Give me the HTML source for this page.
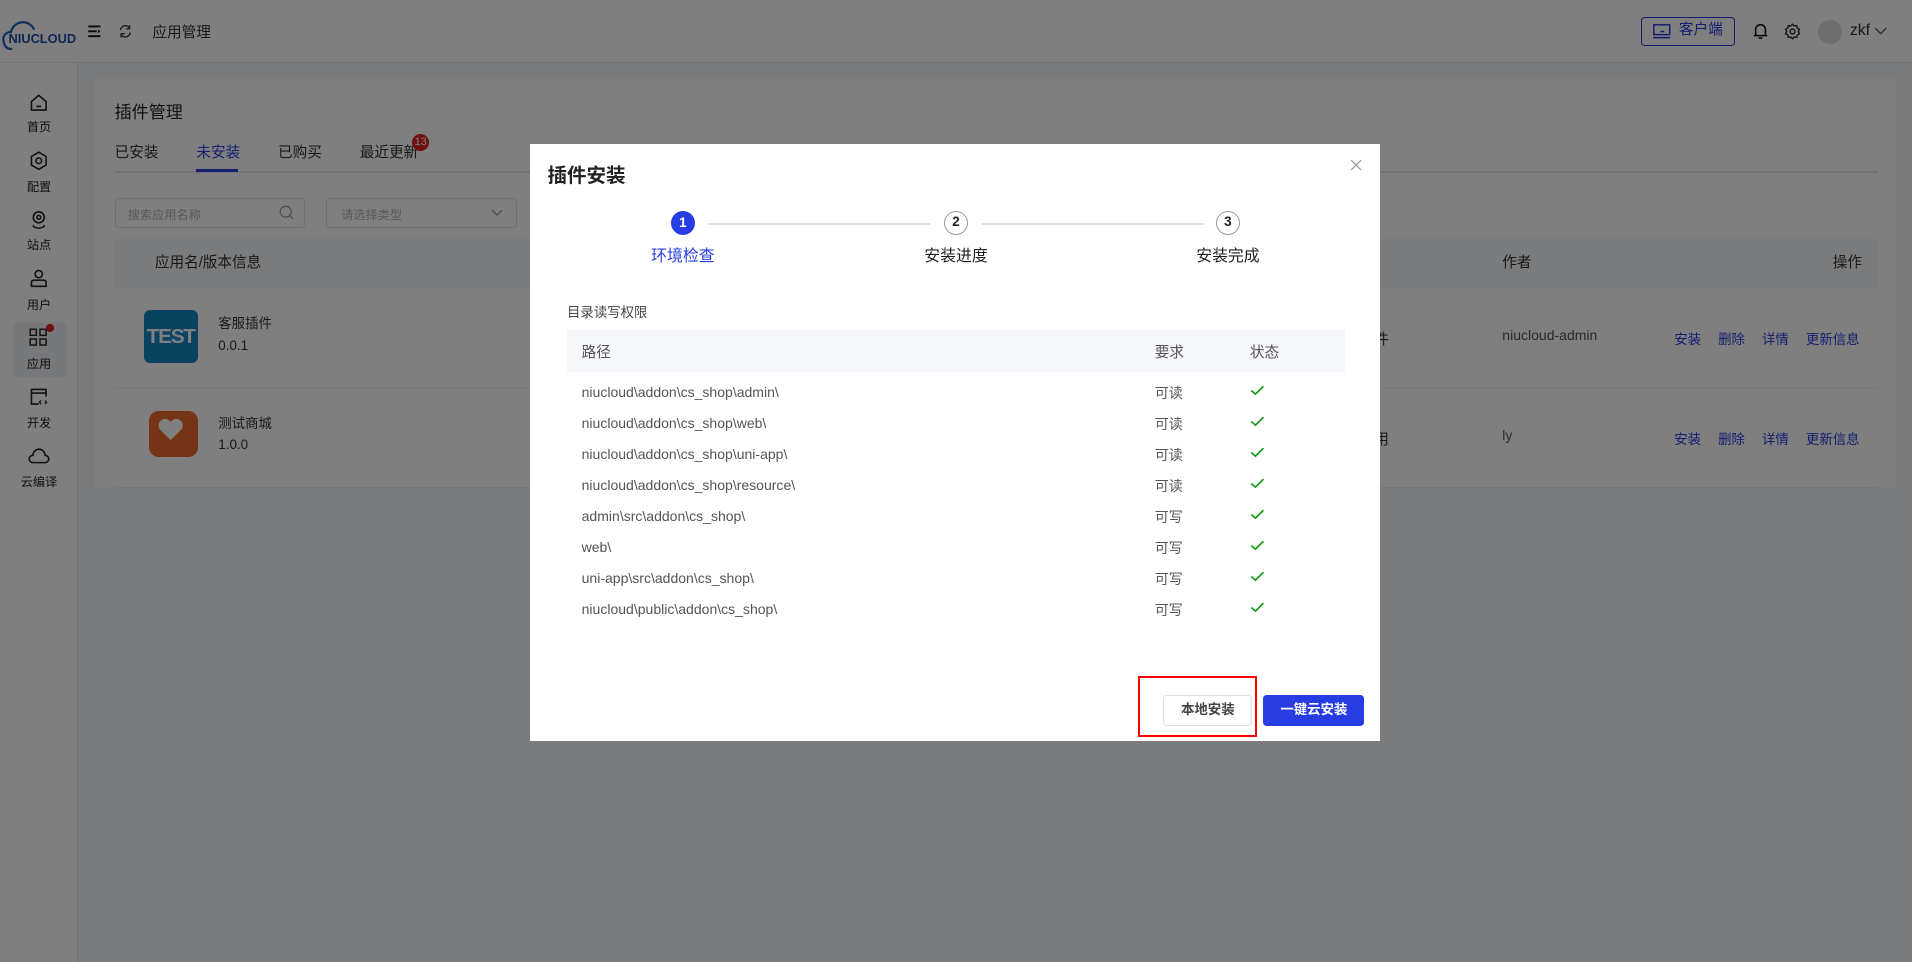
<!DOCTYPE html>
<html><head><meta charset="utf-8"><style>
*{margin:0;padding:0;box-sizing:border-box}
html,body{width:1912px;height:962px;overflow:hidden;background:#fff}
#w{position:relative;width:1568px;height:789px;zoom:1.21939;font-family:"Liberation Sans","Noto Sans CJK SC",sans-serif;color:#333;font-size:12px;background:#f5f6f8}
.a{position:absolute;white-space:nowrap}
.ov{position:absolute;left:0;top:0;width:1568px;height:789px;background:rgba(0,0,0,.5)}
.blue{color:#273de3}
.side .a{width:64px;text-align:center;font-size:10px;color:#222}
</style></head><body><div id="w">
<div class="a" style="left:0;top:0;width:1568px;height:52px;background:#fff;border-bottom:1px solid #e8e8e8"></div>
<svg class="a" style="left:0;top:12px" width="64" height="32" viewBox="0 0 64 32"><path d="M3 22 A6 6 0 0 1 9 14 A10 10 0 0 1 28 12" fill="none" stroke="#1f5fbf" stroke-width="1.8"/><path d="M3 22 Q4 28 10 28" fill="none" stroke="#1f5fbf" stroke-width="1.8"/><text x="7" y="23" font-family="Liberation Sans" font-weight="bold" font-size="10.5" fill="#1f4fa8">NIUCLOUD</text></svg>
<svg class="a" style="left:71px;top:20px" width="12" height="12"><path d="M1 2h10M1 6h7M1 10h10" stroke="#111" stroke-width="1.6"/><path d="M9 4.5l2 1.5-2 1.5" fill="#111"/></svg>
<svg class="a" style="left:97px;top:20px" width="12" height="12" viewBox="0 0 12 12"><path d="M2 5A4 4 0 0 1 9.5 3.5M10 7A4 4 0 0 1 2.5 8.5" fill="none" stroke="#333" stroke-width="1.2"/><path d="M9.5 1v3h-3M2.5 11V8h3" fill="none" stroke="#333" stroke-width="1.1"/></svg>
<div class="a" style="left:125px;top:17px;font-size:12px;color:#333">应用管理</div>
<div class="a" style="left:1346px;top:14px;width:77px;height:24px;border:1px solid #273de3;border-radius:3px;color:#273de3;font-size:12px;padding-left:30px;line-height:21px">客户端</div>
<svg class="a" style="left:1355px;top:19px" width="16" height="14"><rect x="1.5" y="1.5" width="13" height="8" fill="none" stroke="#273de3" stroke-width="1.2"/><path d="M1 12h14M7 7h3" stroke="#273de3" stroke-width="1.2"/></svg>
<svg class="a" style="left:1437px;top:17px" width="14" height="16"><path d="M3 12V7a4 4 0 0 1 8 0v5h1.5H1.5zM5.5 14h3" fill="none" stroke="#111" stroke-width="1.3"/></svg>
<svg class="a" style="left:1463px;top:19px" width="14" height="14" viewBox="0 0 14 14"><circle cx="7" cy="7" r="2" fill="none" stroke="#222" stroke-width="1.1"/><path d="M7 1l1.5 1.5 2-.3.4 2 1.8 1-.9 1.8.9 1.8-1.8 1-.4 2-2-.3L7 13l-1.5-1.5-2 .3-.4-2-1.8-1 .9-1.8-.9-1.8 1.8-1 .4-2 2 .3z" fill="none" stroke="#222" stroke-width="1.1"/></svg>
<div class="a" style="left:1491px;top:16px;width:20px;height:20px;border-radius:50%;background:#ddd"></div>
<div class="a" style="left:1517px;top:18px;font-size:13px;color:#333">zkf</div>
<svg class="a" style="left:1537px;top:22px" width="11" height="8"><path d="M1 1l4.5 4.5L10 1" fill="none" stroke="#555" stroke-width="1"/></svg>
<div class="a" style="left:0;top:52px;width:64px;height:737px;background:#fff;border-right:1px solid #e8e8e8"></div>
<div class="a" style="left:11px;top:264px;width:44px;height:45px;background:#eef0f5;border-radius:4px"></div>
<div class="side">
<svg class="a" style="left:24px;top:76px" width="16" height="16"><path d="M2 7l6-5 6 5v7H2z M6 11h4" fill="none" stroke="#222" stroke-width="1.3"/></svg><div class="a" style="left:0;top:96px">首页</div>
<svg class="a" style="left:24px;top:124px" width="16" height="16"><path d="M8 1l6 3.5v7L8 15l-6-3.5v-7z" fill="none" stroke="#222" stroke-width="1.3"/><circle cx="8" cy="8" r="2.3" fill="none" stroke="#222" stroke-width="1.3"/></svg><div class="a" style="left:0;top:145px">配置</div>
<svg class="a" style="left:24px;top:172px" width="16" height="16"><circle cx="8" cy="6" r="4.5" fill="none" stroke="#222" stroke-width="1.3"/><circle cx="8" cy="6" r="1.6" fill="none" stroke="#222" stroke-width="1.2"/><path d="M4 12.5Q2 14 8 15q6-1 4-2.5" fill="none" stroke="#222" stroke-width="1.2"/></svg><div class="a" style="left:0;top:193px">站点</div>
<svg class="a" style="left:24px;top:220px" width="16" height="16"><circle cx="8" cy="5" r="3" fill="none" stroke="#222" stroke-width="1.3"/><path d="M2 15v-3q0-2 2-2h8q2 0 2 2v3z" fill="none" stroke="#222" stroke-width="1.3"/></svg><div class="a" style="left:0;top:242px">用户</div>
<svg class="a" style="left:24px;top:269px" width="16" height="16"><rect x="1" y="1" width="5" height="5" fill="none" stroke="#222" stroke-width="1.2"/><rect x="9" y="1" width="5" height="5" fill="none" stroke="#222" stroke-width="1.2"/><rect x="1" y="9" width="5" height="5" fill="none" stroke="#222" stroke-width="1.2"/><rect x="9" y="9" width="5" height="5" fill="none" stroke="#222" stroke-width="1.2"/></svg>
<div class="a" style="left:38px;top:266px;width:6px;height:6px;border-radius:50%;background:#e02020"></div><div class="a" style="left:0;top:290px">应用</div>
<svg class="a" style="left:24px;top:317px" width="16" height="16"><path d="M14 8V2H2v12h6M2 5h12" fill="none" stroke="#222" stroke-width="1.3"/><path d="M10 11l-1.5 1.5L10 14M13 11l1.5 1.5L13 14" fill="none" stroke="#222" stroke-width="1"/></svg><div class="a" style="left:0;top:339px">开发</div>
<svg class="a" style="left:23px;top:367px" width="18" height="14"><path d="M4 12a3 3 0 0 1 0-6 5 5 0 0 1 10 0 3 3 0 0 1 0 6z" fill="none" stroke="#222" stroke-width="1.3"/></svg><div class="a" style="left:0;top:387px">云编译</div>
</div>
<div class="a" style="left:78px;top:65px;width:1477px;height:335px;background:#fff"></div>
<div class="a" style="left:94px;top:80px;font-size:14px;color:#222">插件管理</div>
<div class="a" style="left:94px;top:140px;width:1446px;height:2px;background:#e4e7ed"></div>
<div class="a" style="left:94px;top:116px;font-size:12px">已安装</div>
<div class="a blue" style="left:161px;top:116px;font-size:12px">未安装</div>
<div class="a" style="left:161px;top:139px;width:34px;height:2px;background:#273de3"></div>
<div class="a" style="left:228px;top:116px;font-size:12px">已购买</div>
<div class="a" style="left:295px;top:116px;font-size:12px">最近更新</div>
<div class="a" style="left:338px;top:110px;width:14px;height:14px;border-radius:50%;background:#e02020;color:#fff;font-size:9px;text-align:center;line-height:14px">13</div>
<div class="a" style="left:94px;top:162px;width:156px;height:25px;border:1px solid #dcdfe6;border-radius:3px;color:#b0b3b8;font-size:10px;padding:5px 0 0 10px">搜索应用名称</div>
<svg class="a" style="left:229px;top:168px" width="12" height="12"><circle cx="5.5" cy="5.5" r="4.5" fill="none" stroke="#999" stroke-width="1"/><path d="M9 9l2.5 2.5" stroke="#999"/></svg>
<div class="a" style="left:267px;top:162px;width:157px;height:25px;border:1px solid #dcdfe6;border-radius:3px;color:#b0b3b8;font-size:10px;padding:5px 0 0 12px">请选择类型</div>
<svg class="a" style="left:403px;top:171px" width="10" height="6"><path d="M1 1l4 4 4-4" fill="none" stroke="#999"/></svg>
<div class="a" style="left:94px;top:196px;width:1446px;height:40px;background:#f5f7fa"></div>
<div class="a" style="left:127px;top:206px;font-size:12px">应用名/版本信息</div>
<div class="a" style="left:1120px;top:206px;font-size:12px">型</div>
<div class="a" style="left:1232px;top:206px;font-size:12px">作者</div>
<div class="a" style="left:1503px;top:206px;font-size:12px">操作</div>
<div class="a" style="left:94px;top:399px;width:1446px;height:1px;background:#ebeef5"></div>
<div class="a" style="left:94px;top:317px;width:1446px;height:1px;background:#ebeef5"></div>
<div class="a" style="left:118px;top:254px;width:44px;height:44px;border-radius:5px;background:#1484c2;color:#fff;font:bold 17px 'Liberation Sans',sans-serif;text-align:center;line-height:44px;letter-spacing:-1px">TEST</div>
<div class="a" style="left:179px;top:256px;font-size:11px">客服插件</div><div class="a" style="left:179px;top:277px;font-size:11px">0.0.1</div>
<div class="a" style="left:122px;top:337px;width:40px;height:38px;border-radius:8px;background:#e8682a"></div>
<svg class="a" style="left:128px;top:342px" width="24" height="22"><path d="M12 19L3 10a5 5 0 0 1 9-6 5 5 0 0 1 9 6z" fill="#fff"/></svg>
<div class="a" style="left:179px;top:338px;font-size:11px">测试商城</div><div class="a" style="left:179px;top:358px;font-size:11px">1.0.0</div>
<div class="a" style="left:1127px;top:269px">件</div><div class="a" style="left:1127px;top:351px">用</div>
<div class="a" style="left:1232px;top:268px;color:#555;font-size:11.5px">niucloud-admin</div>
<div class="a" style="left:1232px;top:350px;color:#555;font-size:11.5px">ly</div>
<div class="a blue" style="left:1373px;top:269px;font-size:11px">安装</div><div class="a blue" style="left:1409px;top:269px;font-size:11px">删除</div><div class="a blue" style="left:1445px;top:269px;font-size:11px">详情</div><div class="a blue" style="left:1481px;top:269px;font-size:11px">更新信息</div>
<div class="a blue" style="left:1373px;top:351px;font-size:11px">安装</div><div class="a blue" style="left:1409px;top:351px;font-size:11px">删除</div><div class="a blue" style="left:1445px;top:351px;font-size:11px">详情</div><div class="a blue" style="left:1481px;top:351px;font-size:11px">更新信息</div>
<div class="ov"></div>
<div class="a" style="left:435px;top:118px;width:697px;height:490px;background:#fff"></div>
<div class="a" style="left:449px;top:130px;font-size:16px;font-weight:bold;color:#222">插件安装</div>
<svg class="a" style="left:1107px;top:130px" width="10" height="10"><path d="M1 1l8 8M9 1l-8 8" stroke="#999" stroke-width="1"/></svg>
<div class="a" style="left:581px;top:183px;width:182px;height:1.5px;background:#dcdfe6"></div>
<div class="a" style="left:805px;top:183px;width:182px;height:1.5px;background:#dcdfe6"></div>
<div class="a" style="left:550px;top:173px;width:20px;height:20px;border-radius:50%;background:#273de3;color:#fff;font-size:11px;font-weight:bold;text-align:center;line-height:20px">1</div>
<div class="a" style="left:774px;top:173px;width:20px;height:20px;border-radius:50%;border:1.5px solid #999;color:#222;font-size:11px;font-weight:bold;text-align:center;line-height:17px">2</div>
<div class="a" style="left:997px;top:173px;width:20px;height:20px;border-radius:50%;border:1.5px solid #999;color:#222;font-size:11px;font-weight:bold;text-align:center;line-height:17px">3</div>
<div class="a blue" style="left:520px;top:199px;width:80px;text-align:center;font-size:13px">环境检查</div>
<div class="a" style="left:744px;top:199px;width:80px;text-align:center;font-size:13px;color:#222">安装进度</div>
<div class="a" style="left:967px;top:199px;width:80px;text-align:center;font-size:13px;color:#222">安装完成</div>
<div class="a" style="left:465px;top:247px;font-size:11px;color:#444">目录读写权限</div>
<div class="a" style="left:465px;top:271px;width:638px;height:34px;background:#f5f7fa"></div>
<div class="a" style="left:477px;top:280px;color:#555">路径</div><div class="a" style="left:947px;top:280px;color:#555">要求</div><div class="a" style="left:1025px;top:280px;color:#555">状态</div>
<div id="rows"></div>
<div class="a" style="left:933px;top:554px;width:98px;height:50px;border:2px solid #f00"></div>
<div class="a" style="left:954px;top:570px;width:73px;height:25px;border:1px solid #dcdfe6;border-radius:3px;text-align:center;line-height:23px;color:#444;font-size:11px;font-weight:bold">本地安装</div>
<div class="a" style="left:1036px;top:570px;width:83px;height:25px;background:#273de3;border-radius:3px;text-align:center;line-height:25px;color:#fff;font-size:11px;font-weight:bold">一键云安装</div>
<script>
var d=[["niucloud\\addon\\cs_shop\\admin\\","可读"],["niucloud\\addon\\cs_shop\\web\\","可读"],["niucloud\\addon\\cs_shop\\uni-app\\","可读"],["niucloud\\addon\\cs_shop\\resource\\","可读"],["admin\\src\\addon\\cs_shop\\","可写"],["web\\","可写"],["uni-app\\src\\addon\\cs_shop\\","可写"],["niucloud\\public\\addon\\cs_shop\\","可写"]];
var h="";d.forEach(function(r,i){var y=315+i*25.4;
h+='<div class="a" style="left:477px;top:'+y+'px;color:#555;font-size:11.5px">'+r[0]+'</div>';
h+='<div class="a" style="left:947px;top:'+(y-1)+'px;color:#555;font-size:11.5px">'+r[1]+'</div>';
h+='<svg class="a" style="left:1025px;top:'+(y+1)+'px" width="12" height="9"><path d="M1 4.5l3.5 3L11 1" fill="none" stroke="#1a9a1a" stroke-width="1.4"/></svg>';});
document.getElementById('rows').outerHTML=h;
</script>
</div></body></html>
